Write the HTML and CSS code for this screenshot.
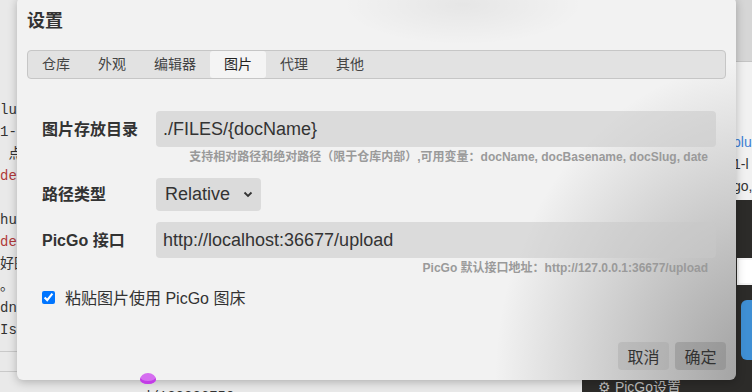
FILE: index.html
```html
<!DOCTYPE html>
<html lang="zh-CN">
<head>
    <meta charset="UTF-8">
    <meta name="viewport" content="width=device-width, initial-scale=1.0">
    <title>设置</title>
    <link rel="stylesheet" href="styles.css">
</head>
<body>
    <div class="page">
        <div class="editor">
            <div class="code">
                <p>lu</p>
                <p>1-b</p>
                <p>&nbsp;点</p>
                <p class="red">de</p>
                <p>&nbsp;</p>
                <p>hub</p>
                <p class="red">de</p>
                <p>好图</p>
                <p>。</p>
                <p>dn</p>
                <p>Ise</p>
            </div>
            <div class="rule"></div>
            <div class="rule"></div>
            <p class="bottom-line">d/123236750</p>
        </div>
        <div class="panel">
            <div class="panel-top">
                <div class="panel-head"></div>
                <p class="blue">plu</p>
                <p>1-l</p>
                <p>go,</p>
            </div>
            <div class="panel-dark">
                <div class="panel-input"></div>
                <div class="panel-btn"></div>
                <p class="panel-foot">⚙ PicGo设置</p>
            </div>
        </div>
    </div>

    <div class="dialog">
        <h1 class="title">设置</h1>
        <div class="tabs">
            <span class="tab">仓库</span>
            <span class="tab">外观</span>
            <span class="tab">编辑器</span>
            <span class="tab active">图片</span>
            <span class="tab">代理</span>
            <span class="tab">其他</span>
        </div>

        <div class="form">
            <div class="row">
                <label class="label">图片存放目录</label>
                <div class="input">./FILES/{docName}</div>
            </div>
            <p class="hint">支持相对路径和绝对路径（限于仓库内部）,可用变量：docName, docBasename, docSlug, date</p>

            <div class="row row-select">
                <label class="label">路径类型</label>
                <div class="select">
                    <span>Relative</span>
                    <svg width="10" height="7" viewBox="0 0 10 7"><path d="M1.5 1.5 L5 5 L8.5 1.5" fill="none" stroke="#333" stroke-width="1.8"/></svg>
                </div>
            </div>

            <div class="row row-api">
                <label class="label">PicGo 接口</label>
                <div class="input">http://localhost:36677/upload</div>
            </div>
            <p class="hint">PicGo 默认接口地址：http://127.0.0.1:36677/upload</p>

            <label class="check">
                <input type="checkbox" checked>
                <span>粘贴图片使用 PicGo 图床</span>
            </label>
        </div>

        <div class="actions">
            <button class="btn">取消</button>
            <button class="btn dark">确定</button>
        </div>
        <div class="pin"></div>
    </div>
</body>
</html>
```

FILE: styles.css
```css
*{
    margin: 0;
    padding: 0;
    box-sizing: border-box;
}
body{
    width: 752px;
    height: 392px;
    overflow: hidden;
    font-family: "Liberation Sans", "Noto Sans CJK SC", sans-serif;
    color: #333;
}

/* page behind the dialog */
.page{
    display: flex;
    height: 392px;
    background-color: #e9e9e9;
}
.editor{
    flex: 1;
    padding-top: 99px;
    font-family: "Liberation Mono", "Noto Sans CJK SC", monospace;
    font-size: 14px;
    color: #333;
}
.code p{
    height: 22px;
    line-height: 22px;
    white-space: nowrap;
}
.code .red{
    color: #b03a3a;
}
.rule{
    height: 1px;
    background-color: #c9c9c9;
    margin-top: 10px;
}
.rule + .rule{
    margin-top: 19px;
}
.bottom-line{
    margin: 17px 0 0 142px;
    font-size: 14px;
    line-height: 16px;
}
.panel{
    width: 170px;
    display: flex;
    flex-direction: column;
}
.panel-top{
    flex-shrink: 0;
    height: 200px;
    background-color: #f1f1f1;
    font-size: 14px;
    padding-left: 151px;
    white-space: nowrap;
    overflow: hidden;
}
.panel-head{
    height: 62px;
    margin-left: -151px;
    background-color: #d6d6d6;
    border-bottom: 1px solid #c4c4c4;
    margin-bottom: 69px;
}
.panel-top p{
    height: 22px;
    line-height: 22px;
}
.panel-top .blue{
    color: #3d7fd6;
}
.panel-dark{
    flex: 1;
    overflow: hidden;
    background-color: #2c2b29;
    padding: 58px 0 0 155px;
}
.panel-input{
    height: 27px;
    border: 2px solid #f4f4f4;
    border-right: none;
    background-color: #fff;
}
.panel-btn{
    height: 60px;
    margin: 15px 0 0 4px;
    border-radius: 6px 0 0 6px;
    background-color: #3f8fd4;
}
.panel-foot{
    margin: 19px 0 0 -139px;
    font-size: 14px;
    line-height: 16px;
    color: #bbb;
    white-space: nowrap;
}

/* dialog */
.dialog{
    position: absolute;
    left: 17px;
    top: -3px;
    width: 719px;
    height: 383px;
    display: flex;
    flex-direction: column;
    padding: 11px 10px 10px;
    border-radius: 6px;
    background:
        radial-gradient(ellipse 270px 320px at 104% 100%, rgba(50,50,50,0.45), rgba(50,50,50,0) 100%),
        radial-gradient(ellipse 120px 40px at 62% 2%, rgba(0,0,0,0.05), rgba(0,0,0,0)),
        #f2f2f2;
    box-shadow: 0 2px 10px rgba(0,0,0,0.25);
}
.title{
    font-size: 18px;
    font-weight: bold;
    line-height: 26px;
    color: #333;
}
.tabs{
    display: flex;
    margin-top: 16px;
    height: 29px;
    border: 1px solid #c6c6c6;
    border-radius: 4px;
    background-color: #e2e2e2;
}
.tab{
    padding: 0 14px;
    line-height: 27px;
    font-size: 14px;
    color: #444;
}
.tab.active{
    background-color: #f4f4f4;
    border-radius: 3px;
    color: #222;
}

.form{
    display: flex;
    flex-direction: column;
    padding: 0 10px 0 15px;
    margin-top: 32px;
}
.row{
    display: flex;
    align-items: center;
}
.label{
    width: 114px;
    padding-bottom: 3px;
    font-size: 16px;
    font-weight: bold;
    color: #333;
}
.input{
    flex: 1;
    height: 36px;
    line-height: 36px;
    padding-left: 7px;
    border-radius: 4px;
    background-color: rgba(200,200,200,0.55);
    font-size: 18px;
    color: #333;
}
.hint{
    margin-top: 3px;
    padding-right: 8px;
    text-align: right;
    font-size: 12px;
    font-weight: bold;
    line-height: 14px;
    color: #9a9a9a;
}
.row-select{
    margin-top: 14px;
}
.select{
    display: flex;
    align-items: center;
    gap: 13px;
    height: 33px;
    padding: 0 8px 0 9px;
    border-radius: 4px;
    background-color: rgba(200,200,200,0.55);
    font-size: 18px;
    color: #333;
}
.row-api{
    margin-top: 11px;
}
.check{
    display: flex;
    align-items: center;
    gap: 10px;
    margin-top: 12px;
    height: 20px;
    font-size: 16px;
    color: #333;
}
.check input{
    width: 13px;
    height: 13px;
    margin: 0;
}

.actions{
    display: flex;
    justify-content: flex-end;
    gap: 6px;
    margin-top: auto;
}
.btn{
    width: 51px;
    height: 28px;
    border: none;
    border-radius: 4px;
    background-color: rgba(160,160,160,0.35);
    font-family: inherit;
    font-size: 16px;
    color: #333;
}
.btn.dark{
    background-color: rgba(120,120,120,0.35);
}
.pin{
    position: absolute;
    left: 123px;
    top: 376px;
    width: 16px;
    height: 11px;
    border-radius: 50% 50% 50% 50% / 60% 60% 40% 40%;
    background-color: #d56ef0;
    box-shadow: inset 0 -3px 0 #c23ce6;
}
```
